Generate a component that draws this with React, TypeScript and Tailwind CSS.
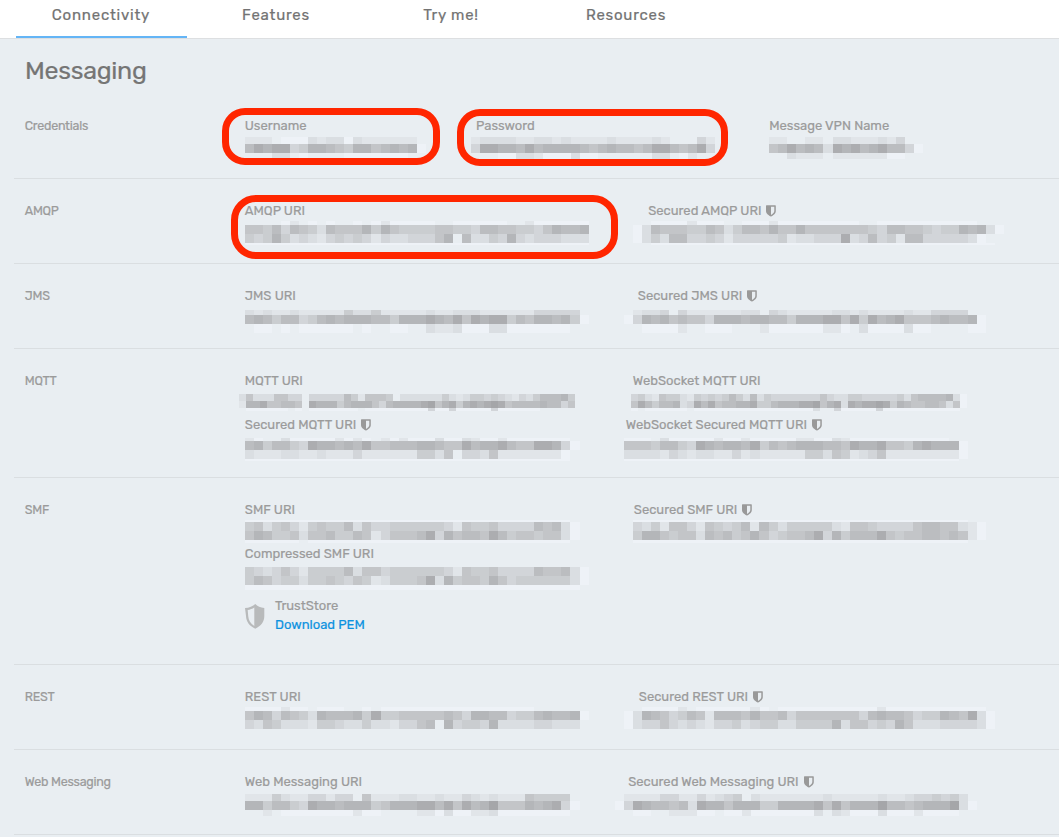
import React from "react";

const SHADES: Record<string, string> = {
  ".": "bg-transparent",
  "-": "bg-[#eef2f7]",
  "1": "bg-[#e1e5e9]",
  "2": "bg-[#dadee2]",
  "3": "bg-[#d2d5d9]",
  "4": "bg-[#cacdd0]",
  "5": "bg-[#c3c5c8]",
  "6": "bg-[#bbbdc0]",
  "7": "bg-[#b4b6b9]",
  "8": "bg-[#acadb0]",
  "9": "bg-[#a5a6a9]",
};

type Line = [height: string, cells: string];

function Mosaic({ lines, cell = "w-[9.05px]", className = "" }: { lines: Line[]; cell?: string; className?: string }) {
  return (
    <div className={`flex flex-col ${className}`} aria-hidden="true">
      {lines.map(([height, cells], i) => (
        <div key={i} className={`flex ${height}`}>
          {cells.split("").map((c, j) => (
            <span key={j} className={`shrink-0 ${cell} ${SHADES[c]}`} />
          ))}
        </div>
      ))}
    </div>
  );
}

function SmallShield() {
  return (
    <svg width="10" height="12" viewBox="0 0 10 12" className="ml-[5px] shrink-0" fill="#999">
      <path fillRule="evenodd" d="M0 0.8Q0 0.2 0.6 0.2H9.2Q9.8 0.2 9.8 0.8V6C9.8 8.8 7 10.6 5 11.6C3 10.6 0 8.8 0 6ZM5 1.7V10C6.5 9.1 8.3 7.8 8.3 6V1.7Z" />
    </svg>
  );
}

type FieldProps = {
  label: string;
  secured?: boolean;
  className?: string;
  ring?: string;
  lines: Line[];
  cell?: string;
  mosaic: string;
};

function Field({ label, secured, className = "", ring, lines, cell, mosaic }: FieldProps) {
  return (
    <div className={`relative shrink-0 ${className}`}>
      <div className="flex h-5 items-center pt-[2px] whitespace-nowrap">
        <span>{label}</span>
        {secured && <SmallShield />}
      </div>
      <div className="h-6">
        <Mosaic lines={lines} cell={cell} className={mosaic} />
      </div>
      {ring && <div className={`absolute border-[7px] border-[#ff2600] ${ring}`} />}
    </div>
  );
}

function Row({ title, height, children }: { title: string; height: string; children: React.ReactNode }) {
  return (
    <section className={`ml-[14px] flex border-b border-[#dadee1] pt-[21px] ${height}`}>
      <div className="w-[230.8px] shrink-0 pt-px pl-[10.8px] text-[12.5px] leading-5 tracking-[-0.26px]">{title}</div>
      {children}
    </section>
  );
}

const TABS = ["Connectivity", "Features", "Try me!", "Resources"];

export default function App() {
  return (
    <div className="h-[837px] w-[1059px] overflow-hidden bg-[#e9eef2] font-['Rubik','Roboto',sans-serif] text-[13px] text-[#9b9b9b] [-webkit-text-stroke:0.2px]">
      <nav className="flex h-[39px] gap-1 border-b border-[#dddfe1] bg-white pl-4">
        {TABS.map((tab, i) => (
          <div
            key={tab}
            className={`flex h-[38px] w-[171px] justify-center border-b-2 pt-[5px] pr-px text-[15px] leading-5 tracking-[0.77px] text-[#737373] ${i === 0 ? "border-[#64b5f6]" : "border-transparent"}`}
          >
            {tab}
          </div>
        ))}
      </nav>
      <h1 className="h-[55px] pt-[16px] pl-[25px] text-[25px] leading-8 tracking-[-0.3px] text-[#757575]">Messaging</h1>

      <Row title="Credentials" height="h-[85px]">
        <Field
          label="Username" className="w-[231.2px]" mosaic="pt-[2px]"
          ring="-top-[7px] -left-[22.6px] h-[57px] w-[218px] rounded-[23px]"
          lines={[["h-[7px]", "111.---2122-2111111"], ["h-[9px]", "6878834776547756767-"], ["h-[5px]", "...22.-....-------"]]}
        />
        <Field
          label="Password" className="w-[293.2px]" mosaic="pt-[2px] -ml-[5px]"
          ring="-top-[6px] -left-[18.5px] h-[57px] w-[271px] rounded-[23px]"
          lines={[["h-[7px]", "1222211221211112111121...31"], ["h-[9px]", "388776867777656766568865683"], ["h-[6px]", "...--221---2--......22.-1.."]]}
        />
        <Field
          label="Message VPN Name" mosaic="pt-[2px]"
          lines={[["h-[7px]", "11..11.22111213"], ["h-[9px]", "5686762878678663-"], ["h-[6px]", "..2111.111111--."]]}
        />
      </Row>

      <Row title="AMQP" height="h-[85px]">
        <Field
          label="AMQP URI" className="w-[403.4px]" mosaic="pt-px"
          ring="-top-[5px] -left-[13.6px] h-[64px] w-[387px] rounded-[25px]"
          lines={[["h-1", "....-1.-.-..-.-1-----..------..1------"], ["h-[9px]", "55463654265557475444455443665544357667"], ["h-[9px]", "43474232134343132233357.62243732333222"], ["h-[2px]", "--------------------------------------"]]}
        />
        <Field
          label="Secured AMQP URI" secured mosaic="pt-px -ml-[15px]"
          lines={[["h-1", "..----1---..---1---------..-----------"], ["h-[9px]", "-265554465246657557555555543665543447672-"], ["h-[9px]", "-2426633431333334122333823634166333332-"], ["h-[2px]", "..--------------------------------------"]]}
        />
      </Row>

      <Row title="JMS" height="h-[85px]">
        <Field
          label="JMS URI" className="w-[393px]" mosaic="pt-[5px]"
          lines={[["h-[5px]", "2121121111142241111121122211111133333"], ["h-[9px]", "6764663467677766477787685878846577674-"], ["h-[9px]", ".--.-.------.-..--..2112---22-------."]]}
        />
        <Field
          label="Secured JMS URI" secured mosaic="pt-[5px] -ml-[14px]"
          lines={[["h-[5px]", ".1223.311111122.3211111221211112113333."], ["h-[9px]", "-37675655377767766477788584867855567667-"], ["h-[9px]", "..----1..---...1------11-.2----2--....--"]]}
        />
      </Row>

      <Row title="MQTT" height="h-[129px]">
        <div className="w-[381px] shrink-0">
          <Field
            label="MQTT URI" cell="w-[7px]" mosaic="pt-1 -ml-[6px]"
            lines={[["h-[7px]", "252225533.333336415554.2222224212443432132466674"], ["h-[7px]", "177855665.87774677753677778957847878985666676635"], ["h-[3px]", ".------.-.-------.---------3--3-----3------"]]}
          />
          <Field
            label="Secured MQTT URI" secured mosaic="pt-1"
            lines={[["h-[3px]", "1-..2-----1-1-.1-1---2--21--1-------"], ["h-[9px]", "674664387767685566677655867786558873-"], ["h-[9px]", "21112211211131111114425.33251111111-"], ["h-[2px]", "------------------------------------"]]}
          />
        </div>
        <div>
          <Field
            label="WebSocket MQTT URI" className="pl-[7px]" cell="w-[7px]" mosaic="pt-1 -ml-[2px]"
            lines={[["h-[7px]", "34215442143434642624333333353224433333425666672-"], ["h-[7px]", "58646672386856677844677788957828788984765566525-"], ["h-[3px]", "-.------.-----------------2..3-----3-----------"]]}
          />
          <Field
            label="WebSocket Secured MQTT URI" secured mosaic="pt-1 -ml-[2px]"
            lines={[["h-[3px]", "---.2-----1--1-----11--21-----------"], ["h-[9px]", "5554664387677684656777665877855478777-"], ["h-[9px]", "2222132122113121111144254123511111111-"], ["h-[2px]", "-------------------------------------"]]}
          />
        </div>
      </Row>

      <Row title="SMF" height="h-[187px]">
        <div className="w-[389px] shrink-0">
          <Field
            label="SMF URI" mosaic="pt-px"
            lines={[["h-[2px]", "------------------------------------"], ["h-[9px]", "452453145446253344444431544533336562-"], ["h-[9px]", "576445255644651355568375665864554552-"], ["h-[3px]", "------.-----------------------------"]]}
          />
          <Field
            label="Compressed SMF URI" mosaic="pt-1"
            lines={[["h-[9px]", "4323531444462553444444315445333365562-"], ["h-[9px]", "4653442445435412444582745547534444442-"], ["h-[5px]", "-------------------------------------"]]}
          />
          <div className="flex items-center pt-[9px]">
            <svg width="20" height="25" viewBox="0 0 20 25" className="mt-[2px] shrink-0" fill="#b8babb">
              <path fillRule="evenodd" d="M10.3 0C12.3 2.2 15.5 3.8 19.3 4V12C19.3 18 16.2 21.5 10.3 24.8C4.2 21.5 1.3 18 1 12L0 4.1C4 4 8 2.3 10.3 0ZM9.3 3.5C7.5 4.8 5 5.7 2.7 6L3.2 12C3.6 16.7 5.5 19.6 9.3 22Z" />
            </svg>
            <div className="ml-[10.2px] leading-[19px]">
              <div className="tracking-[-0.05px]">TrustStore</div>
              <a className="text-[#0c92e0]">Download PEM</a>
            </div>
          </div>
        </div>
        <Field
          label="Secured SMF URI" secured mosaic="pt-px -ml-px"
          lines={[["h-[2px]", "-------------------------------------"], ["h-[9px]", "32415531543461642444442155433335665521-"], ["h-[9px]", "477545526564575345568374666854556656" + "51-"], ["h-[3px]", "-------------------------------------"]]}
        />
      </Row>

      <Row title="REST" height="h-[85px]">
        <Field
          label="REST URI" className="w-[394px]" mosaic="pt-px"
          lines={[["h-1", "----1--.---..-.-----------------"], ["h-[9px]", "5763654276667484455555653776634467667-"], ["h-[9px]", "325422214432242213356.734437222233222"]]}
        />
        <Field
          label="Secured REST URI" secured mosaic="pt-px -ml-[15px]"
          lines={[["h-1", "..----1.------1-.-----------1-----------"], ["h-[9px]", "-276534651666575563555555536766534476582-"], ["h-[9px]", "-233532321334234422444472553437522233332-"]]}
        />
      </Row>

      <Row title="Web Messaging" height="h-[85px]">
        <Field
          label="Web Messaging URI" className="w-[383.4px]" mosaic="pt-[3px]"
          lines={[["h-[7px]", "111421133133.51112211211321211154444"], ["h-[9px]", "774664387767774577788685867955576783-"], ["h-[6px]", "..1.--------1--....11-2--112--------"]]}
        />
        <Field
          label="Secured Web Messaging URI" secured mosaic="pt-[3px] -ml-[13px]"
          lines={[["h-[7px]", ".1111331131234.211111112111112112334342"], ["h-[9px]", "-38766562877577744777785857779665677792-"], ["h-[6px]", "..--..111--.--1-------2.21---2---1----"]]}
        />
      </Row>
    </div>
  );
}
